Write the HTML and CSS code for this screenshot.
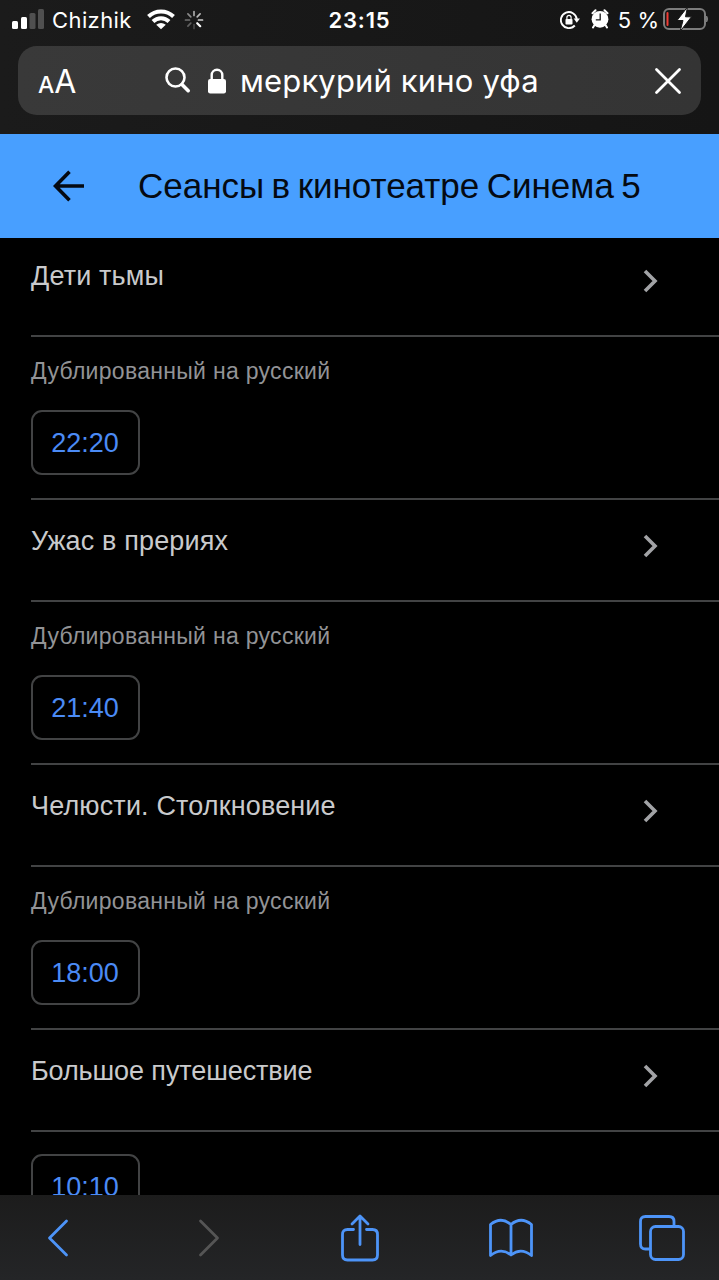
FILE: index.html
```html
<!DOCTYPE html>
<html lang="ru">
<head>
<meta charset="UTF-8">
<meta name="viewport" content="width=device-width, initial-scale=1.0">
<title>Сеансы в кинотеатре Синема 5</title>
<link rel="stylesheet" href="styles.css">
</head>
<body>

<div class="browser-top">
  <div class="status">
    <div class="status-left">
      <svg class="signal" width="32" height="20" viewBox="0 0 32 20">
        <rect x="0" y="12" width="6" height="8" rx="1.5" fill="#fff"/>
        <rect x="9" y="8" width="6" height="12" rx="1.5" fill="#fff"/>
        <rect x="17.500" y="4" width="6" height="16" rx="1.500" fill="#505050"/>
        <rect x="26" y="0" width="6" height="20" rx="1.500" fill="#505050"/>
      </svg>
      <span class="carrier">Chizhik</span>
      <svg class="wifi" width="28" height="22" viewBox="0 0 28 22">
        <g fill="none" stroke="#fff" stroke-width="4">
          <path d="M1.500 8.500a18 18 0 0 1 25 0"/>
          <path d="M6 13.500a11.500 11.500 0 0 1 16 0"/>
        </g>
        <path d="M14 21.300l-4.800-4.600q4.800-3.600 9.600 0z" fill="#fff"/>
      </svg>
      <svg class="spinner" width="20" height="20" viewBox="-10 -10 20 20">
        <g stroke-width="1.700" stroke-linecap="round">
          <path d="M0-4.500v-4" stroke="#a8a8a8"/>
          <path d="M3.200-3.200l2.900-2.900" stroke="#b8b8b8"/>
          <path d="M4.500 0h4" stroke="#d0d0d0"/>
          <path d="M3.200 3.200l3 3" stroke="#fff" stroke-width="2.200"/>
          <path d="M0 4.500v4" stroke="#484848"/>
          <path d="M-3.200 3.200l-2.900 2.900" stroke="#606060"/>
          <path d="M-4.500 0h-4" stroke="#707070"/>
          <path d="M-3.200-3.200l-2.900-2.900" stroke="#8a8a8a"/>
        </g>
      </svg>
    </div>
    <div class="clock">23:15</div>
    <div class="status-right">
      <svg class="rotation" width="20" height="18" viewBox="0 0 20 18">
        <path d="M14.800 14.500A8 8 0 1 1 16.800 8" fill="none" stroke="#fff" stroke-width="1.900"/>
        <path d="M13.700 7.500h6.200l-3.100 4.200z" fill="#fff"/>
        <rect x="5.500" y="8" width="7" height="5.500" rx=".8" fill="#fff"/>
        <path d="M6.900 8V6.500a2.100 2.100 0 0 1 4.200 0V8" fill="none" stroke="#fff" stroke-width="1.200"/>
      </svg>
      <svg class="alarm" width="18" height="20" viewBox="0 0 18 20">
        <circle cx="9" cy="10.300" r="8.400" fill="#fff"/>
        <path d="M1.500 4.200L4.500 1.300M16.500 4.200L13.500 1.300M3.200 16.500L2 18.500M14.800 16.500l1.200 2" stroke="#fff" stroke-width="2" stroke-linecap="round"/>
        <path d="M9.200 4.500v6.300H4.800" fill="none" stroke="#1a1a1a" stroke-width="1.300"/>
      </svg>
      <span class="percent">5 %</span>
      <svg class="battery" width="46" height="24" viewBox="0 0 46 24">
        <rect x="1" y="2" width="41" height="20" rx="5" fill="none" stroke="#7d7d7d" stroke-width="2"/>
        <path d="M43.600 9q2 3 0 6z" fill="#7d7d7d" stroke="#7d7d7d"/>
        <rect x="3.500" y="5" width="2" height="14" rx="1" fill="#f03c35"/>
        <path d="M24.500 0L14 13.500h6L17 24.500 28.500 9.800h-6z" fill="#fff" stroke="#171717" stroke-width="1"/>
      </svg>
    </div>
  </div>

  <div class="address">
    <div class="text-size"><span class="small-a">A</span>A</div>
    <div class="query">
      <svg class="search" width="26" height="27" viewBox="0 0 26 27">
        <circle cx="10.500" cy="10.500" r="9" fill="none" stroke="#fff" stroke-width="2.600"/>
        <path d="M17 17.500l6.200 6.200" stroke="#fff" stroke-width="3.600" stroke-linecap="round"/>
      </svg>
      <svg class="lock" width="18" height="26" viewBox="0 0 18 26">
        <rect x="0" y="11" width="18" height="14.500" rx="2.200" fill="#fff"/>
        <path d="M3.700 12V7a5.300 5.300 0 0 1 10.600 0v5" fill="none" stroke="#fff" stroke-width="2.400"/>
      </svg>
      <span class="query-text">меркурий кино уфа</span>
    </div>
    <svg class="close" width="28" height="28" viewBox="0 0 28 28">
      <path d="M2.500 2.500l23 23M25.500 2.500l-23 23" stroke="#fff" stroke-width="2.800" stroke-linecap="round"/>
    </svg>
  </div>
</div>

<header class="page-header">
  <svg class="back" width="32" height="32" viewBox="0 0 32 32">
    <path d="M16.500 1.800L2.500 16l14 14.200M2.500 16H31" fill="none" stroke="#050a12" stroke-width="3.600"/>
  </svg>
  <h1>Сеансы в кинотеатре Синема 5</h1>
</header>

<main class="movies">
  <section class="movie">
    <div class="movie-title">
      <h2>Дети тьмы</h2>
      <svg class="chevron" width="16" height="24" viewBox="0 0 16 24"><path d="M2 2L12 12 2 22" fill="none" stroke="#a2a3a6" stroke-width="3.600"/></svg>
    </div>
    <div class="sessions">
      <p>Дублированный на русский</p>
      <a class="time">22:20</a>
    </div>
  </section>

  <section class="movie">
    <div class="movie-title">
      <h2>Ужас в прериях</h2>
      <svg class="chevron" width="16" height="24" viewBox="0 0 16 24"><path d="M2 2L12 12 2 22" fill="none" stroke="#a2a3a6" stroke-width="3.600"/></svg>
    </div>
    <div class="sessions">
      <p>Дублированный на русский</p>
      <a class="time">21:40</a>
    </div>
  </section>

  <section class="movie">
    <div class="movie-title">
      <h2>Челюсти. Столкновение</h2>
      <svg class="chevron" width="16" height="24" viewBox="0 0 16 24"><path d="M2 2L12 12 2 22" fill="none" stroke="#a2a3a6" stroke-width="3.600"/></svg>
    </div>
    <div class="sessions">
      <p>Дублированный на русский</p>
      <a class="time">18:00</a>
    </div>
  </section>

  <section class="movie">
    <div class="movie-title">
      <h2 class="long">Большое путешествие</h2>
      <svg class="chevron" width="16" height="24" viewBox="0 0 16 24"><path d="M2 2L12 12 2 22" fill="none" stroke="#a2a3a6" stroke-width="3.600"/></svg>
    </div>
    <div class="sessions">
      <a class="time">10:10</a>
    </div>
  </section>
</main>

<nav class="toolbar">
  <svg width="22" height="38" viewBox="0 0 22 38"><path d="M19.500 2L2.500 19l17 17" class="icon"/></svg>
  <svg width="22" height="38" viewBox="0 0 22 38"><path d="M2.500 2l17 17-17 17" class="icon off"/></svg>
  <svg width="38" height="48" viewBox="0 0 38 48">
    <path d="M12.500 15.500H6.500q-5 0-5 5V41q0 5 5 5h25q5 0 5-5V20.500q0-5-5-5h-6M19 30.500V2.500M11 10l8-8 8 8" class="icon"/>
  </svg>
  <svg width="44" height="40" viewBox="0 0 44 40">
    <path d="M22 6.500Q12-2 1.500 6.500v31Q12 29 22 37 32 29 42.500 37.500v-31Q32-2 22 6.500zV36" class="icon"/>
  </svg>
  <svg width="46" height="46" viewBox="0 0 46 46">
    <path d="M11 34H6.500q-5 0-5-5V6.500q0-5 5-5H30q5 0 5 5V11" class="icon"/>
    <rect x="11.500" y="11.500" width="33" height="33" rx="5" class="icon"/>
  </svg>
</nav>

</body>
</html>
```
FILE: styles.css
```css
* {
  box-sizing: border-box;
}
body {
  margin: 0;
  height: 1280px;
  display: flex;
  flex-direction: column;
  overflow: hidden;
  background: #000;
  color: #fff;
  font-family: "Liberation Sans", Arial, sans-serif;
}
svg {
  display: block;
  flex: none;
}
h1, h2, p {
  margin: 0;
  font-weight: normal;
  white-space: nowrap;
}

/* safari top */
.browser-top {
  height: 134px;
  flex: none;
  background: linear-gradient(90deg, #1b1b1b, #151515);
  font-family: Inter, sans-serif;
}
.status {
  height: 39px;
  display: grid;
  grid-template-columns: 1fr auto 1fr;
  align-items: center;
  font-size: 22px;
  line-height: 28px;
  white-space: nowrap;
}
.status-left, .status-right {
  display: flex;
  align-items: center;
}
.status-left {
  padding-left: 12px;
}
.signal {
  margin: -1px 8px 0 0;
}
.carrier {
  width: 87px;
  letter-spacing: 0.4px;
}
.wifi {
  margin: -1px 0 0 8px;
}
.spinner {
  margin-left: 9px;
}
.clock {
  font-weight: 600;
  letter-spacing: 0.8px;
}
.status-right {
  justify-content: flex-end;
  padding-right: 10px;
}
.alarm {
  margin: -2px 9px 0 11px;
}
.battery {
  margin: -1px 0 0 4px;
}
.address {
  height: 69px;
  margin: 7px 18px 0;
  padding: 0 19px 0 20px;
  display: flex;
  align-items: center;
  border-radius: 19px;
  background: linear-gradient(90deg, #393939, #343434);
}
.text-size {
  width: 127px;
  padding-top: 2px;
  font-size: 32px;
}
.small-a {
  font-size: 23px;
  font-weight: 500;
}
.query {
  flex: 1;
  display: flex;
  align-items: center;
}
.lock {
  margin-left: 17px;
}
.query-text {
  margin-left: 14px;
  font-size: 31px;
  letter-spacing: 0.15px;
  white-space: nowrap;
}

/* page header */
.page-header {
  height: 104px;
  flex: none;
  display: flex;
  align-items: center;
  padding-left: 53px;
  background: #489fff;
  color: #050a12;
}
.page-header h1 {
  margin-left: 53px;
  font-size: 35px;
  word-spacing: -2.3px;
}

/* list of movies */
.movies {
  flex: 1;
  min-height: 0;
  overflow: hidden;
}
.movie {
  margin-left: 31px;
}
.movie:first-child {
  margin-top: -3px;
}
.movie-title {
  height: 102px;
  display: flex;
  justify-content: space-between;
  padding: 26px 60px 0 0;
  border-bottom: 2px solid #424344;
}
.movie-title h2 {
  font-size: 27px;
  line-height: 31px;
  letter-spacing: 0.15px;
  color: #c9cacc;
}
.movie-title h2.long {
  letter-spacing: -0.1px;
}
.chevron {
  margin-top: 8px;
}
.sessions {
  height: 163px;
  padding-top: 22px;
  border-bottom: 2px solid #424344;
}
.sessions p {
  height: 51px;
  font-size: 23px;
  line-height: 25px;
  letter-spacing: 0.3px;
  color: #929396;
}
.time {
  display: flex;
  align-items: center;
  justify-content: center;
  width: 109px;
  height: 65px;
  padding: 1px 1px 0 0;
  border: 2px solid #424344;
  border-radius: 11px;
  font-size: 27px;
  color: #4b8bf5;
}

/* safari bottom */
.toolbar {
  height: 85px;
  flex: none;
  display: grid;
  grid-template-columns: repeat(5, 151px);
  align-items: center;
  justify-content: center;
  justify-items: center;
  background: linear-gradient(#1c1c1c, #242527);
}
.icon {
  fill: none;
  stroke: #4d94f8;
  stroke-width: 2.8;
  stroke-linecap: round;
  stroke-linejoin: round;
}
.off {
  stroke: #555;
}
```
